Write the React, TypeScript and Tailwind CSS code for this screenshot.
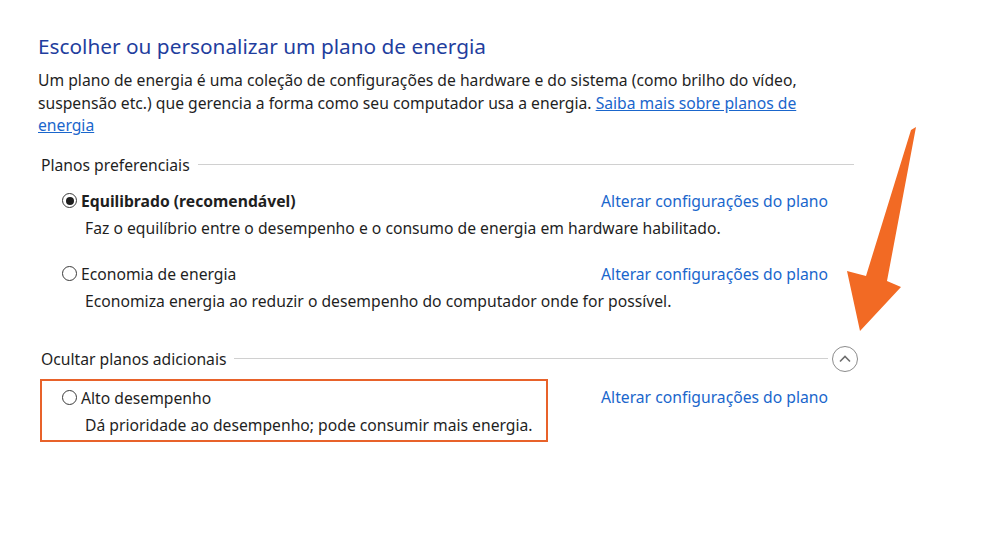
import React from "react";

const font = { fontFamily: '"Noto Sans", "Open Sans", sans-serif' };

const Radio = ({ checked }: { checked?: boolean }) => (
  <span className="flex h-[15px] w-[15px] shrink-0 items-center justify-center rounded-full border border-[#3a3a3a] bg-white">
    {checked && <span className="h-[8px] w-[8px] rounded-full bg-[#1e1e1e]" />}
  </span>
);

const PlanLink = () => (
  <a className="cursor-pointer whitespace-nowrap leading-[22px] text-[#1a66cc]">Alterar configurações do plano</a>
);

type PlanProps = {
  title: string;
  desc: string;
  checked?: boolean;
  bold?: boolean;
  link?: boolean;
};

const PlanBody = ({ title, desc, checked, bold, link }: PlanProps) => (
  <div className="whitespace-nowrap">
    <div className="flex items-center leading-[22px]">
      <Radio checked={checked} />
      <span className={"ml-[4px] " + (bold ? "font-bold" : "")}>{title}</span>
      {link && (
        <span className="ml-auto">
          <PlanLink />
        </span>
      )}
    </div>
    <div className="mt-[5px] pl-[23px] leading-[22px]">{desc}</div>
  </div>
);

const SectionHeader = ({ label, className }: { label: string; className?: string }) => (
  <div className={"flex items-center gap-[8px] " + (className ?? "")}>
    <span className="whitespace-nowrap leading-[22px]">{label}</span>
    <span className="h-px flex-1 bg-[#d0d0d0]" />
  </div>
);

const Arrow = () => (
  <svg className="pointer-events-none absolute left-0 top-0" width="984" height="554">
    <polygon
      points="911,130 916,127 887,281 901,287 860,331 847,271 866,276"
      fill="#f26a24"
    />
  </svg>
);

export default function App() {
  return (
    <div className="relative h-[554px] w-[984px] overflow-hidden bg-white text-[15.7px] text-[#1f1f1f]" style={font}>
      <div className="pl-[38px] pt-[32px]">
        <h1 className="text-[20.8px] leading-[28px] text-[#1f3e9e]">
          Escolher ou personalizar um plano de energia
        </h1>
        <p className="mt-[9px] w-[792px] leading-[22.5px]">
          Um plano de energia é uma coleção de configurações de hardware e do sistema (como brilho do vídeo,
          suspensão etc.) que gerencia a forma como seu computador usa a energia.{" "}
          <a className="cursor-pointer text-[#1a66cc] underline">Saiba mais sobre planos de energia</a>
        </p>

        <div className="w-[816px] pl-[3px]">
          <SectionHeader label="Planos preferenciais" className="mt-[17px]" />
        </div>

        <div className="mt-[14px] w-[790px] pl-[24px]">
          <PlanBody title="Equilibrado (recomendável)" desc="Faz o equilíbrio entre o desempenho e o consumo de energia em hardware habilitado." checked bold link />
        </div>
        <div className="mt-[24px] w-[790px] pl-[24px]">
          <PlanBody title="Economia de energia" desc="Economiza energia ao reduzir o desempenho do computador onde for possível." link />
        </div>

        <div className="mt-[34px] flex w-[820px] items-center gap-[4px] pl-[3px]">
          <SectionHeader label="Ocultar planos adicionais" className="flex-1" />
          <button className="flex h-[26px] w-[26px] items-center justify-center rounded-full border-[1.5px] border-[#8c8c8c] bg-white">
            <svg width="14" height="10" viewBox="0 0 14 10" fill="none">
              <path d="M2 7.5 L7 2.5 L12 7.5" stroke="#6e6e6e" strokeWidth="1.6" />
            </svg>
          </button>
        </div>

        <div className="mt-[7px] flex w-[790px] items-start justify-between pl-[2px]">
          <div className="w-[508px] border-2 border-[#e8622a] pb-[4px] pl-[20px] pt-[6px]">
            <PlanBody title="Alto desempenho" desc="Dá prioridade ao desempenho; pode consumir mais energia." />
          </div>
          <div className="mt-[7px]">
            <PlanLink />
          </div>
        </div>
      </div>
      <Arrow />
    </div>
  );
}
